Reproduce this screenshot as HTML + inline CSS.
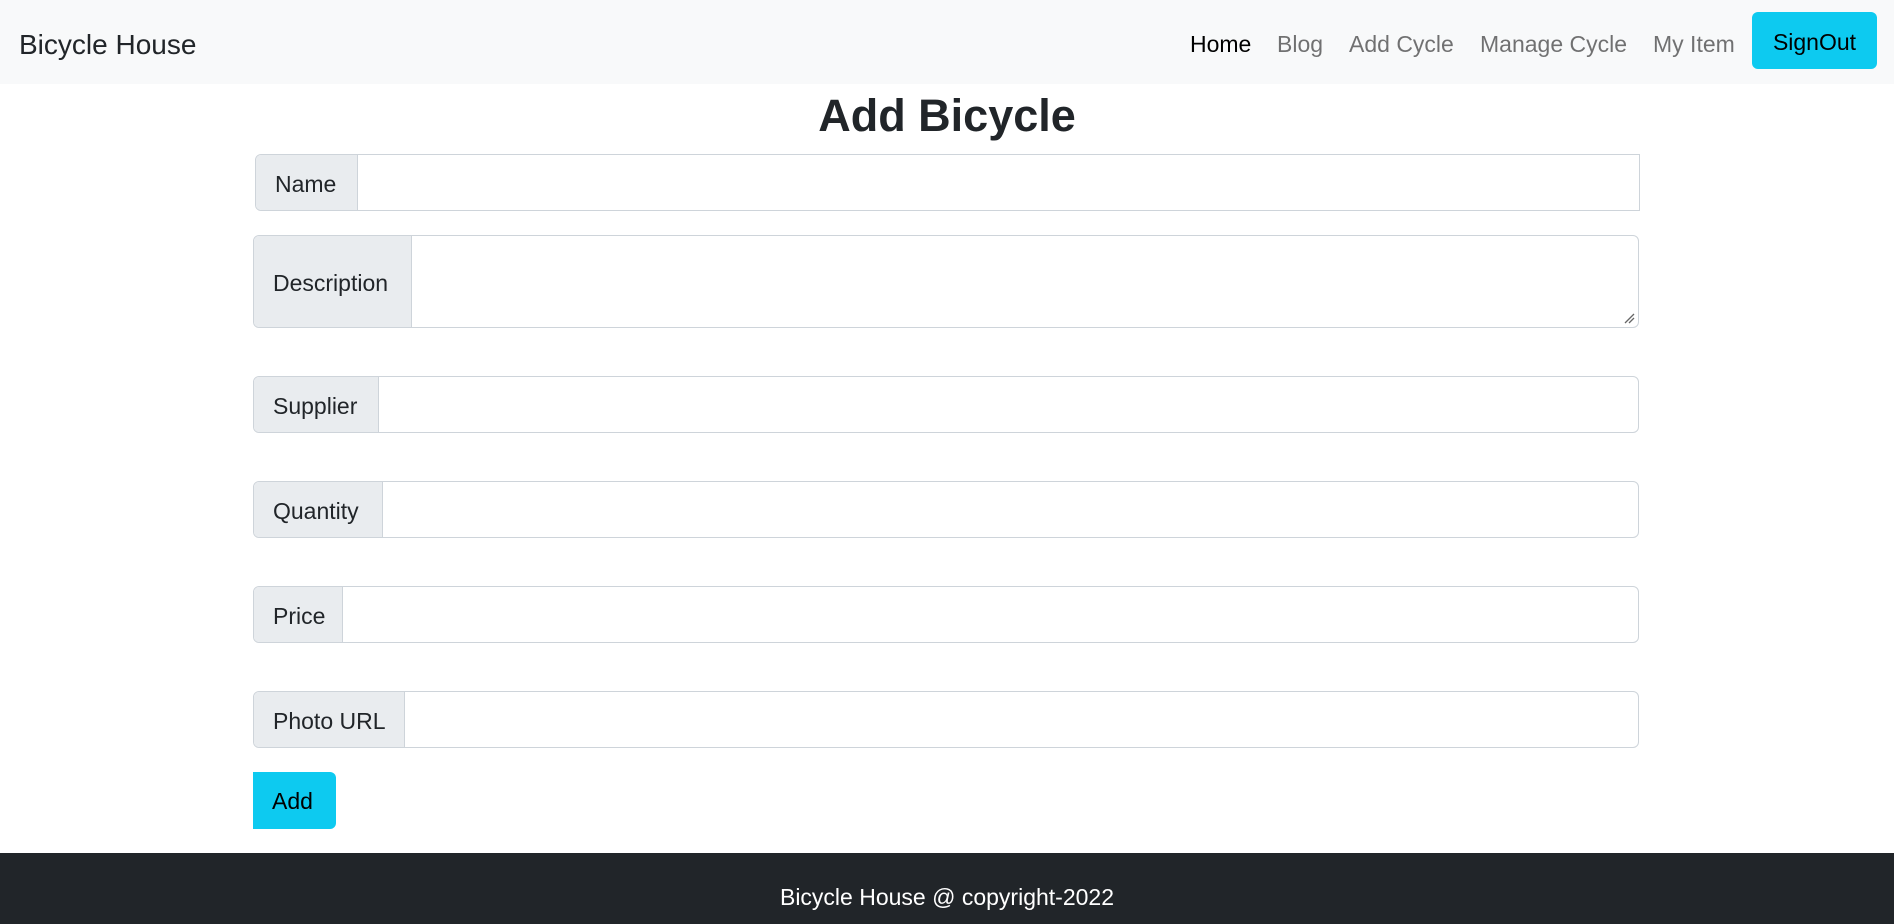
<!DOCTYPE html>
<html><head><meta charset="utf-8"><style>
*{box-sizing:border-box;margin:0;padding:0}
body{width:1894px;height:924px;position:relative;background:#fff;font-family:"Liberation Sans",sans-serif;color:#212529;overflow:hidden}
.nav{position:absolute;left:0;top:0;width:1894px;height:84px;background:#f8f9fa}
.brand{position:absolute;left:19px;top:28px;font-size:28px;line-height:34px;color:#212529}
.link{position:absolute;top:29px;font-size:23px;line-height:30px;color:rgba(0,0,0,.55)}
.so{position:absolute;left:1752px;top:12px;width:125px;height:57px;background:#0dcaf0;border-radius:6px;font-size:23px;line-height:61px;text-align:center;color:#000}
h2{position:absolute;left:0;width:1894px;top:87px;text-align:center;font-size:45px;line-height:58px;font-weight:bold}
.row{position:absolute;left:253px;width:1386px;border:1.5px solid #ced4da;border-radius:6px;overflow:hidden;background:#fff}
.lab{position:absolute;left:0;top:0;bottom:0;background:#e9ecef;border-right:1.5px solid #ced4da;font-size:23px;display:flex;align-items:center;padding-left:19px;padding-top:3px;color:#212529}
.add{position:absolute;left:253px;top:772px;width:83px;height:57px;background:#0dcaf0;border-radius:0 6px 6px 0;font-size:23px;line-height:59px;padding-left:19px;color:#000}
.foot{position:absolute;left:0;top:853px;width:1894px;height:71px;background:#212529;color:#fff;text-align:center;font-size:23px;line-height:30px;padding-top:29px}
</style></head><body>
<div class="nav">
<div class="brand">Bicycle House</div>
<div class="link" style="left:1190px;color:#000">Home</div>
<div class="link" style="left:1277px">Blog</div>
<div class="link" style="left:1349px">Add Cycle</div>
<div class="link" style="left:1480px">Manage Cycle</div>
<div class="link" style="left:1653px">My Item</div>
<div class="so">SignOut</div>
</div>
<h2>Add Bicycle</h2>
<div class="row" style="left:255px;top:154px;height:57px;width:1385px;border-radius:6px 0 0 6px"><div class="lab" style="width:102px">Name</div></div>
<div class="row" style="top:235px;height:93px"><div class="lab" style="width:158px">Description</div>
<svg style="position:absolute;right:3px;bottom:3px" width="12" height="12"><path d="M2 11L11 2M6 11L11 6" stroke="#666" stroke-width="1.3"/></svg></div>
<div class="row" style="top:376px;height:57px"><div class="lab" style="width:125px">Supplier</div></div>
<div class="row" style="top:481px;height:57px"><div class="lab" style="width:129px">Quantity</div></div>
<div class="row" style="top:586px;height:57px"><div class="lab" style="width:89px">Price</div></div>
<div class="row" style="top:691px;height:57px"><div class="lab" style="width:151px">Photo URL</div></div>
<div class="add">Add</div>
<div class="foot">Bicycle House @ copyright-2022</div>
</body></html>
